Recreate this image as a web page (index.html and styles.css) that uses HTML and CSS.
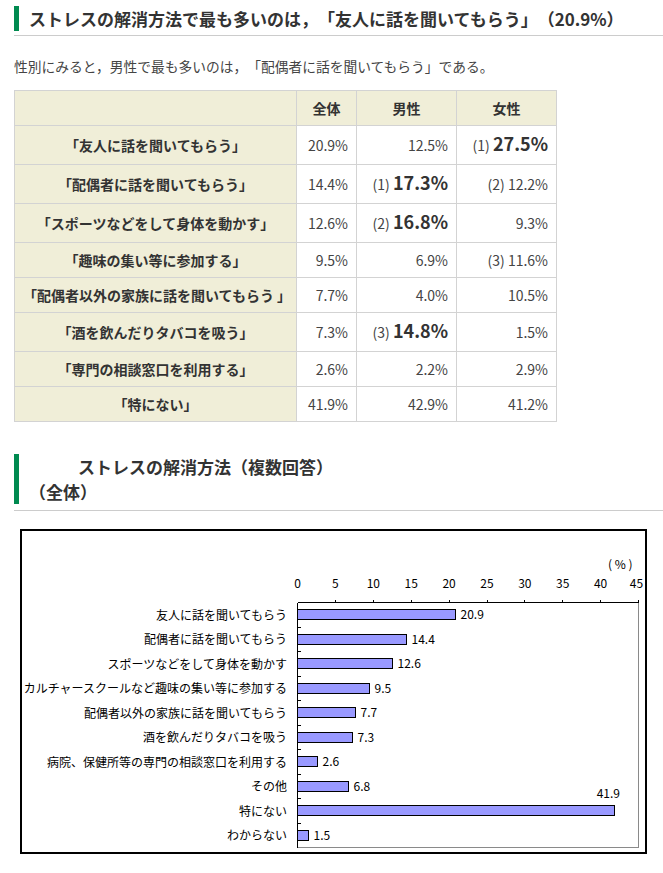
FILE: index.html
```html
<!DOCTYPE html>
<html lang="ja">
<head>
<meta charset="utf-8">
<title>ストレスの解消方法</title>
<link rel="stylesheet" href="styles.css">
</head>
<body>
<div class="page">
  <h2 class="heading"><span class="heading-inner">ストレスの解消方法で最も多いのは，「友人に話を聞いてもらう」（20.9%）</span></h2>
  <p class="lead">性別にみると，男性で最も多いのは，「配偶者に話を聞いてもらう」である。</p>

  <table class="data">
    <colgroup><col class="c1"><col class="c2"><col class="c3"><col class="c4"></colgroup>
    <tr class="head"><th></th><th>全体</th><th>男性</th><th>女性</th></tr>
    <tr class="tall"><th>「友人に話を聞いてもらう」</th><td>20.9%</td><td>12.5%</td><td>(1) <b class="big">27.5%</b></td></tr>
    <tr class="tall"><th>「配偶者に話を聞いてもらう」</th><td>14.4%</td><td>(1) <b class="big">17.3%</b></td><td>(2) 12.2%</td></tr>
    <tr class="tall"><th>「スポーツなどをして身体を動かす」</th><td>12.6%</td><td>(2) <b class="big">16.8%</b></td><td>9.3%</td></tr>
    <tr><th>「趣味の集い等に参加する」</th><td>9.5%</td><td>6.9%</td><td>(3) 11.6%</td></tr>
    <tr><th>「配偶者以外の家族に話を聞いてもらう 」</th><td>7.7%</td><td>4.0%</td><td>10.5%</td></tr>
    <tr class="tall"><th>「酒を飲んだりタバコを吸う」</th><td>7.3%</td><td>(3) <b class="big">14.8%</b></td><td>1.5%</td></tr>
    <tr><th>「専門の相談窓口を利用する」</th><td>2.6%</td><td>2.2%</td><td>2.9%</td></tr>
    <tr><th>「特にない」</th><td>41.9%</td><td>42.9%</td><td>41.2%</td></tr>
  </table>

  <h2 class="heading heading-2"><span class="heading-inner">ストレスの解消方法（複数回答）<br>（全体）</span></h2>

  <div class="chart">
    <svg class="chart-svg" width="623" height="321" viewBox="0 0 623 321">
      <g class="axis-text">
        <text x="586" y="37.5">( % )</text>
        <text x="275.5" y="56.5" text-anchor="middle">0</text>
        <text x="313.4" y="56.5" text-anchor="middle">5</text>
        <text x="351.3" y="56.5" text-anchor="middle">10</text>
        <text x="389.2" y="56.5" text-anchor="middle">15</text>
        <text x="427.1" y="56.5" text-anchor="middle">20</text>
        <text x="465.0" y="56.5" text-anchor="middle">25</text>
        <text x="502.8" y="56.5" text-anchor="middle">30</text>
        <text x="540.7" y="56.5" text-anchor="middle">35</text>
        <text x="578.6" y="56.5" text-anchor="middle">40</text>
        <text x="614.5" y="56.5" text-anchor="middle">45</text>
      </g>
      <g class="frame">
        <line x1="616.5" y1="71.5" x2="616.5" y2="316.5" class="gray"/>
        <line x1="275.5" y1="316.5" x2="616.5" y2="316.5" class="gray"/>
        <line x1="275.5" y1="71.5" x2="616.5" y2="71.5" class="black"/>
        <line x1="275.5" y1="71.5" x2="275.5" y2="316.5" class="black"/>
        <path class="black" d="M313.5 71.5v-3M351.5 71.5v-3M389.5 71.5v-3M427.5 71.5v-3M465.5 71.5v-3M502.5 71.5v-3M540.5 71.5v-3M578.5 71.5v-3M616.5 71.5v-3"/>
        <path class="black" d="M275.5 96.5h3M275.5 120.5h3M275.5 145.5h3M275.5 169.5h3M275.5 194.5h3M275.5 218.5h3M275.5 243.5h3M275.5 267.5h3M275.5 292.5h3"/>
      </g>
      <g class="bars">
        <rect x="275.5" y="78.5" width="158" height="10"/>
        <rect x="275.5" y="103.5" width="109" height="10"/>
        <rect x="275.5" y="127.5" width="95" height="10"/>
        <rect x="275.5" y="152.5" width="72" height="10"/>
        <rect x="275.5" y="176.5" width="58" height="10"/>
        <rect x="275.5" y="201.5" width="55" height="10"/>
        <rect x="275.5" y="225.5" width="20" height="10"/>
        <rect x="275.5" y="250.5" width="51" height="10"/>
        <rect x="275.5" y="274.5" width="317" height="10"/>
        <rect x="275.5" y="299.5" width="11" height="10"/>
      </g>
      <g class="labels" text-anchor="end">
        <text x="265" y="88.5">友人に話を聞いてもらう</text>
        <text x="265" y="113">配偶者に話を聞いてもらう</text>
        <text x="265" y="137.5">スポーツなどをして身体を動かす</text>
        <text x="265" y="162">カルチャースクールなど趣味の集い等に参加する</text>
        <text x="265" y="186.5">配偶者以外の家族に話を聞いてもらう</text>
        <text x="265" y="211">酒を飲んだりタバコを吸う</text>
        <text x="265" y="235.5">病院、保健所等の専門の相談窓口を利用する</text>
        <text x="265" y="260">その他</text>
        <text x="265" y="284.5">特にない</text>
        <text x="265" y="309">わからない</text>
      </g>
      <g class="values">
        <text x="438.5" y="88">20.9</text>
        <text x="389.5" y="112.5">14.4</text>
        <text x="375.5" y="137">12.6</text>
        <text x="352.5" y="161.5">9.5</text>
        <text x="338.5" y="186">7.7</text>
        <text x="335.5" y="210.5">7.3</text>
        <text x="300.5" y="235">2.6</text>
        <text x="331.5" y="259.5">6.8</text>
        <text x="586.3" y="267" text-anchor="middle">41.9</text>
        <text x="291.5" y="308.5">1.5</text>
      </g>
    </svg>
  </div>
</div>
</body>
</html>
```

FILE: styles.css
```css
* { box-sizing: border-box; }

body {
  margin: 0;
  font-family: "Noto Sans CJK JP", "Noto Sans", sans-serif;
  color: #333;
  background: #fff;
  text-spacing-trim: space-all;
}

.page {
  padding-left: 14px;
}

.heading {
  margin: 6px 0 0;
  padding-bottom: 4px;
  font-size: 17px;
  font-weight: bold;
  line-height: 25px;
  color: #333;
  border-bottom: 1px solid #cccccc;
}

.heading-inner {
  display: block;
  border-left: 5px solid #008a50;
  padding-left: 10px;
}

.heading-2 {
  margin-top: 32px;
  padding-bottom: 6px;
}

.heading-2 .heading-inner {
  text-indent: 49px;
}

.lead {
  margin: 20px 0 0;
  font-size: 13.75px;
  line-height: 20px;
  color: #444;
}

.data {
  margin-top: 14px;
  border-collapse: collapse;
  table-layout: fixed;
  width: 542px;
  font-size: 14px;
  color: #333;
}

.data .c1 { width: 282px; }
.data .c2 { width: 60px; }
.data .c3 { width: 100px; }
.data .c4 { width: 100px; }

.data th,
.data td {
  border: 1px solid #d3d3d3;
  padding: 0 8px;
  line-height: 34px;
  white-space: nowrap;
}

.data th {
  background: #f0eed8;
  font-weight: bold;
  font-size: 14px;
  text-align: center;
}

.data td {
  text-align: right;
  background: #fff;
  color: #444;
}

.data tr.tall th,
.data tr.tall td {
  line-height: 38px;
}

.big {
  font-size: 18px;
  font-weight: bold;
  line-height: 1;
  color: #333;
}

.chart {
  margin: 18px 0 0 6px;
  width: 627px;
  height: 325px;
  border: 2px solid #000;
  background: #fff;
}

.chart-svg {
  display: block;
  font-family: "Noto Sans CJK JP", "Noto Sans", sans-serif;
  font-size: 12px;
}

.chart-svg text {
  fill: #000;
}

.frame line,
.frame path {
  fill: none;
  stroke-width: 1;
  shape-rendering: crispEdges;
}

.frame .black { stroke: #000; }
.frame .gray { stroke: #8a8a8a; }

.bars rect {
  fill: #9999ff;
  stroke: #000;
  stroke-width: 1;
  shape-rendering: crispEdges;
}
```
